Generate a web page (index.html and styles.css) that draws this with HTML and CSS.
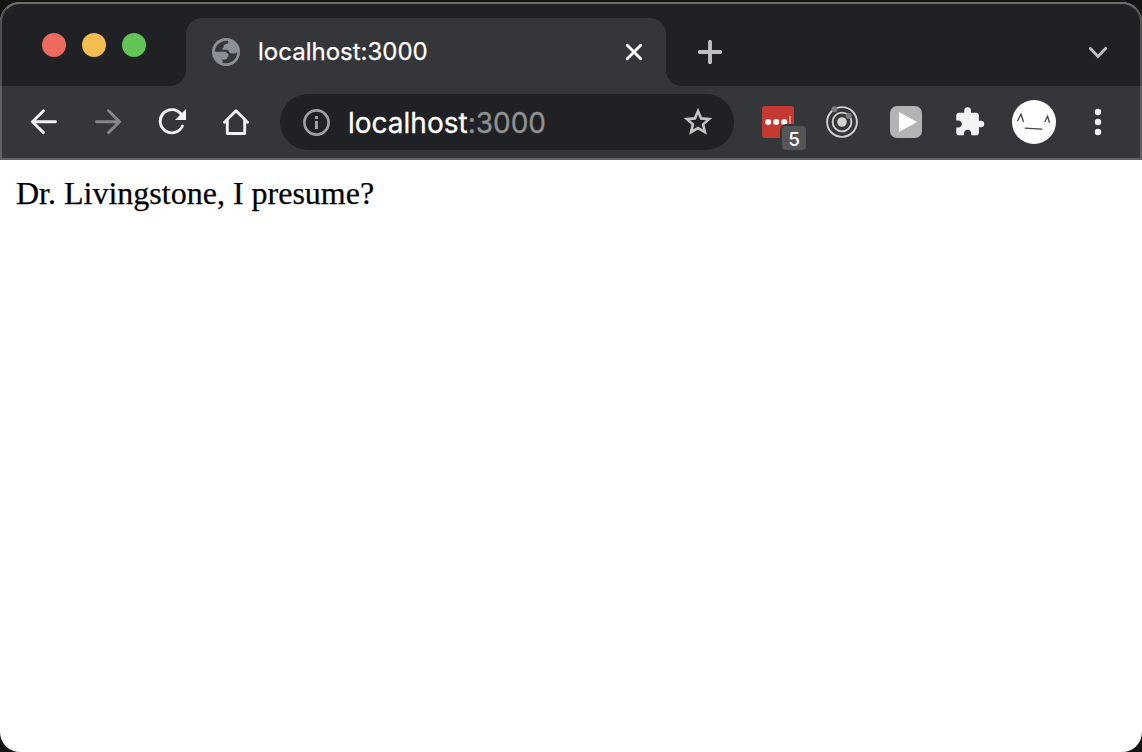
FILE: index.html
```html
<!DOCTYPE html>
<html lang="en">
<head>
<meta charset="utf-8">
<title>localhost:3000</title>
<link rel="stylesheet" href="styles.css">
</head>
<body>
<div class="window">
  <div class="chrome">
    <div class="tabstrip">
      <div class="lights"><i class="light red"></i><i class="light yellow"></i><i class="light green"></i></div>
      <div class="tab">
        <svg class="globe" width="28" height="28" viewBox="0 0 28 28"><circle cx="14" cy="14" r="14" fill="#8b9097"/><path fill="#35363a" d="M2.9 13.8A11.200 11.200 0 0 1 16.200 3v1.200q0 1.700-1.700 1.900-2.800.2-2.800 2.400 0 1.300-1.300 1.600v1.700h4.300q1.800 0 2.200 1.700.5 2 2.500 2h3.200q1.200 0 1.600-1.100h1A11.200 11.200 0 0 1 10.500 24.700v-3.200h3q1.800 0 1.800-1.700 0-1.500 1.400-1.500-.2-4.500-5-4.500z"/></svg>
        <span class="tab-title">localhost:3000</span>
        <svg class="close" width="18" height="18" viewBox="0 0 18 18"><path d="M2.3 2.3l13.4 13.4M15.7 2.3L2.3 15.7" stroke="#fff" stroke-width="2.9" stroke-linecap="round"/></svg>
      </div>
      <svg class="plus" width="24" height="24" viewBox="0 0 24 24"><path d="M12 1.8v20.4M1.8 12h20.4" stroke="#bdc1c6" stroke-width="3.9" stroke-linecap="round"/></svg>
      <svg class="chevron" width="20" height="14" viewBox="0 0 20 14"><path d="M2.4 2.4l7.6 8 7.6-8" fill="none" stroke="#bdc1c6" stroke-width="2.9" stroke-linecap="round"/></svg>
    </div>
    <div class="toolbar">
      <div class="nav">
        <svg width="28" height="28" viewBox="0 0 28 28"><path d="M25.500 13.700H3M13.500 2.800L2.500 13.700l11 10.900" fill="none" stroke="#f1f3f4" stroke-width="2.9" stroke-linecap="round"/></svg>
        <svg width="28" height="28" viewBox="0 0 28 28"><path d="M2.500 13.700h22.500M14.500 2.800l11 10.900-11 10.900" fill="none" stroke="#86878a" stroke-width="2.9" stroke-linecap="round"/></svg>
        <svg width="28" height="28" viewBox="0 0 28 28"><path d="M23.500 6.800A11.600 11.600 0 1 0 24.400 18" fill="none" stroke="#f1f3f4" stroke-width="2.9" stroke-linecap="round"/><path d="M28 1V12H17z" fill="#f1f3f4"/></svg>
        <svg width="28" height="28" viewBox="0 0 28 28"><path d="M2.500 14.200L14 2.700l11.500 11.500M5.300 12v13.500h17.400V12" fill="none" stroke="#f1f3f4" stroke-width="2.9" stroke-linecap="round" stroke-linejoin="round"/></svg>
      </div>
      <div class="omnibox">
        <svg width="28" height="28" viewBox="0 0 28 28"><circle cx="14.500" cy="14.500" r="12.100" fill="none" stroke="#9aa0a6" stroke-width="2.700"/><path d="M13 8h3v3h-3zM13 13h3v8h-3z" fill="#9aa0a6"/></svg>
        <span class="url">localhost<span class="port">:3000</span></span>
        <svg class="star" width="30" height="30" viewBox="0 0 30 30"><path d="M15 4.100l3.100 7.300 8 .7-6 5.300 1.800 7.800-6.900-4.100-6.900 4.100 1.800-7.800-6-5.300 8-.7z" fill="none" stroke="#c4c4c4" stroke-width="2.600"/></svg>
      </div>
      <div class="extensions">
        <div class="ext-password">
          <svg width="32" height="32" viewBox="0 0 32 32"><rect width="32" height="32" rx="3" fill="#c43a31"/><g fill="#fff"><circle cx="6.200" cy="16" r="3"/><circle cx="14.200" cy="16" r="3"/><circle cx="22.200" cy="16" r="3"/></g><path d="M28 10v12" stroke="#e29b96" stroke-width="1.700"/></svg>
          <span class="badge">5</span>
        </div>
        <svg width="32" height="32" viewBox="0 0 32 32"><g fill="none" stroke="#d0d2d1" stroke-width="1.900"><circle cx="16" cy="16" r="14.900"/><circle cx="16" cy="16" r="9.400"/></g><circle cx="16" cy="16" r="4.800" fill="#d0d2d1"/><circle cx="8.500" cy="3.200" r="3" fill="#7c7e7d"/><circle cx="22.800" cy="9.800" r="3" fill="#7c7e7d"/></svg>
        <svg width="32" height="32" viewBox="0 0 32 32"><rect width="32" height="32" rx="7" fill="#b4b4b4"/><path d="M9 6v20l18-10z" fill="#fff"/></svg>
        <svg width="32" height="32" viewBox="0 0 24 24"><path transform="translate(-.3 0)" d="M20.500 11H19V7c0-1.100-.9-2-2-2h-4V3.500a2.500 2.500 0 0 0-5 0V5H4c-1.100 0-1.990.9-1.990 2v3.800H3.500c1.490 0 2.700 1.210 2.700 2.700s-1.210 2.700-2.700 2.700H2V20c0 1.100.9 2 2 2h3.800v-1.500c0-1.490 1.210-2.700 2.700-2.700s2.700 1.210 2.700 2.700V22H17c1.100 0 2-.9 2-2v-4h1.500a2.500 2.500 0 0 0 0-5z" fill="#f1f3f4"/></svg>
      </div>
      <svg class="avatar" width="44" height="44" viewBox="0 0 44 44"><circle cx="22" cy="22" r="22" fill="#fff"/><path d="M5.500 21l3.500-6.800 2.500 7.800M32.700 22l2.900-5.800 1.900 6.500M12.800 28.200l17.500 1" fill="none" stroke="#444" stroke-width="1.300"/></svg>
      <svg class="menu" width="8" height="28" viewBox="0 0 8 28"><g fill="#f1f3f4"><circle cx="4" cy="4" r="3.200"/><circle cx="4" cy="14" r="3.200"/><circle cx="4" cy="24" r="3.200"/></g></svg>
    </div>
  </div>
  <main class="page">Dr. Livingstone, I presume?</main>
</div>
</body>
</html>
```
FILE: styles.css
```css
* { box-sizing: border-box; }
body { margin: 0; padding-top: 2px; height: 752px; background: #141413; overflow: hidden; }
svg { display: block; flex: none; }
.window { height: 750px; border-radius: 20px; background: #fff; overflow: hidden; }
.chrome { position: relative; height: 158px; font-family: Inter, "Liberation Sans", sans-serif; }
/* translucent rim of the window */
.chrome::after { content: ""; position: absolute; inset: 0; border: 2px solid rgba(255, 255, 255, .22); border-top-color: rgba(255, 255, 255, .34); border-radius: 20px 20px 0 0; pointer-events: none; }
.tabstrip { height: 84px; padding: 16px 34px 0 42px; display: flex; background: #202124; }
.lights { width: 144px; padding-top: 15px; display: flex; gap: 16px; }
.light { width: 24px; height: 24px; border-radius: 50%; }
.red { background: #ed6a5e; }
.yellow { background: #f5bd4f; }
.green { background: #61c454; }
.tab { position: relative; width: 480px; height: 68px; padding: 0 23px 0 26px; display: flex; align-items: center; border-radius: 16px 16px 0 0; background: #35363a; }
.tab::before, .tab::after { content: ""; position: absolute; bottom: 0; width: 16px; height: 16px; }
.tab::before { left: -16px; background: radial-gradient(circle at 0 0, transparent 15.5px, #35363a 16.5px); }
.tab::after { right: -16px; background: radial-gradient(circle at 100% 0, transparent 15.5px, #35363a 16.5px); }
.tab-title { margin-left: 18px; color: #fff; font-size: 24px; line-height: 32px; -webkit-text-stroke: .25px; }
.close { margin-left: auto; }
.plus { margin: 22px 0 0 32px; }
.chevron { margin: 28px 0 0 auto; }
.toolbar { height: 74px; padding: 0 40px 2px 30px; display: flex; align-items: center; background: #35363a; }
.nav { width: 250px; display: flex; gap: 36px; }
.omnibox { width: 454px; height: 56px; padding: 0 21px 0 22px; display: flex; align-items: center; border-radius: 28px; background: #202124; }
.url { margin-left: 18px; padding-top: 2px; color: #fff; font-size: 28px; line-height: 36px; -webkit-text-stroke: .3px; }
.port { color: #909193; }
.star { margin-left: auto; }
.extensions { margin-left: 28px; display: flex; gap: 32px; }
.ext-password { position: relative; }
.badge { position: absolute; left: 18px; top: 18px; width: 28px; height: 28px; border: 2px solid #35363a; border-radius: 6px; background: #555; color: #fff; font: 500 19px/27px Inter, sans-serif; text-align: center; }
.avatar { margin-left: 26px; }
.menu { margin-left: auto; }
.page { padding: 15px 16px; color: #000; font: 32px/36px "Liberation Serif", serif; -webkit-text-stroke: .25px; }
```
